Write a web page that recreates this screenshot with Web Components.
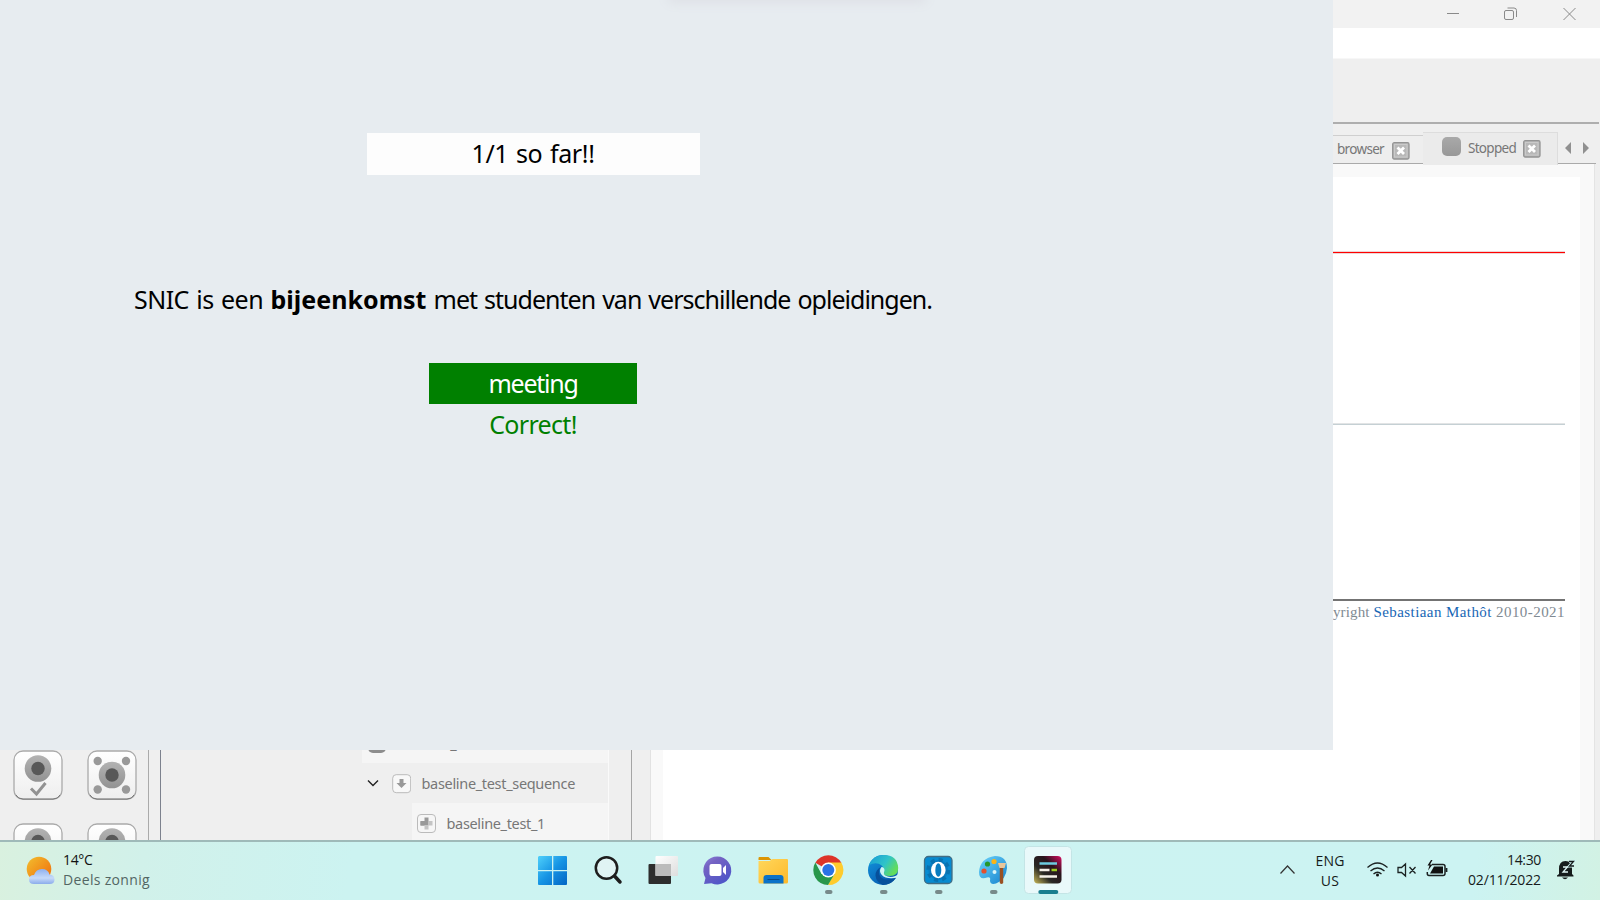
<!DOCTYPE html>
<html lang="nl"><head><meta charset="utf-8"><title>Desktop</title>
<style>html,body{margin:0;width:1600px;height:900px;overflow:hidden;background:#efefef;font-family:"Noto Sans",sans-serif}</style></head>
<body><desk-top></desk-top>
<script>
const def=(name,html,after)=>customElements.define(name,class extends HTMLElement{
  constructor(){super();this.attachShadow({mode:'open'}).innerHTML=html}
  connectedCallback(){if(after)after(this)}
});
// Text run whose letter spacing is adjusted to fill a given width
def('fit-text','<style>:host{display:inline-block;white-space:pre;flex:none}span{display:inline-block}</style><span><slot></slot></span>',el=>{
  const w=+el.getAttribute('w'),s=el.shadowRoot.querySelector('span'),n=el.textContent.length;
  el.style.width=w+'px';
  s.style.letterSpacing=((w-s.getBoundingClientRect().width)/n)+'px';
});
def('window-controls',`<style>:host{display:block;height:28px;background:#f2f2f2}svg{display:block;margin-left:auto}</style>
<svg width="180" height="28" viewBox="1420 0 180 28" fill="none" stroke="#8a8a8a"><path d="M1447 13.500h12"/><rect x="1504.500" y="10.500" width="9" height="9" rx="1.500"/><path d="M1507.500 8h6.500q2.500 0 2.500 2.500v6.500"/><path d="M1563.500 8l12 12M1575.500 8l-12 12"/></svg>`);
def('close-box',`<style>:host{display:block;width:18px;height:18px}svg{display:block}</style>
<svg width="18" height="18"><rect x=".7" y=".7" width="16.300" height="16.300" rx="1.500" fill="#b8b8b8" stroke="#949494" stroke-width="1.300"/><rect x="2.500" y="2.500" width="12.500" height="12.500" fill="none" stroke="#cacaca"/><path d="M5.500 5.500l6.500 6.500M12 5.500L5.500 12" stroke="#fff" stroke-width="2.800"/></svg>`);
def('editor-tabs',`<style>:host{display:flex;height:40px;justify-content:flex-end;color:#777;font-size:13.500px;box-sizing:border-box;position:relative}
.a{width:90px;height:29px;margin-top:11px;box-sizing:border-box;border-top:1px solid #cfcfcf;border-bottom:1px solid #aaa;display:flex;background:#eee;line-height:27px}
.a fit-text{margin-left:4px}.a close-box{margin:5.500px 0 0 7.500px}
.b{width:135px;height:33px;margin-top:8px;box-sizing:border-box;border-top:1px solid #ddd;border-right:1px solid #ddd;background:#ebebeb;display:flex;line-height:31px}
i{width:19px;height:19px;border-radius:5px;background:linear-gradient(#a9a9a9,#989898);margin:4px 7px 0 19px}.b close-box{margin:7px 0 0 7px}
.c{width:38px;height:40px;box-sizing:border-box;border-bottom:1px solid #aaa;margin-right:4px}svg{display:block}</style>
<div class="a"><fit-text w="47">browser</fit-text><close-box></close-box></div>
<div class="b"><i></i><fit-text w="48">Stopped</fit-text><close-box></close-box></div>
<div class="c"><svg width="38" height="39" viewBox="1558 124 38 39" fill="#909090"><path d="M1565 148l6-6v12zM1589 148l-6-6v12z"/></svg></div>`);
def('document-view',`<style>:host{display:block;flex:1;background:#f9f9f9;border-right:1px solid #e4e4e4;border-left:1px solid #e2e2e2;margin-right:5px;padding:13px 14px 0 12px;min-height:0}
main{background:#fff;height:100%;padding:74px 15px 0;box-sizing:border-box}
hr{border:0;margin:0;height:1px}.r{background:#f00;border:solid #ecd6d6;border-width:1px 0}.g{background:#c5d0d4;border-top:1px solid #e2e4e5;margin-top:169px}.k{background:#737373;height:2px;margin-top:174px}
p{margin:-1px 0 0;text-align:right;font:15px/24px "Liberation Serif",serif;color:#808a92;white-space:nowrap}b{font-weight:400;color:#1766b5}</style>
<main><hr class="r"><hr class="g"><hr class="k"><p><fit-text w="66">Copyright </fit-text><b><fit-text w="122.500">Sebastiaan Mathôt </fit-text></b><fit-text w="69">2010-2021</fit-text></p></main>`);
def('tool-button',`<style>:host{display:block;width:50px;height:50px}svg{display:block}</style><svg width="50" height="50" viewBox="0 0 50 50"><defs><linearGradient id="g" x2="0" y2="1"><stop stop-color="#fff"/><stop offset="1" stop-color="#eee"/></linearGradient><linearGradient id="h" x2="0" y2="1"><stop stop-color="#b3b3b3"/><stop offset="1" stop-color="#929292"/></linearGradient></defs>
<rect x="1" y="1" width="48" height="48.300" rx="9" fill="url(#g)" stroke="#aaa" stroke-width="1.300"/><path d="M3 45q2 4 7 4h30q5 0 7-4" fill="none" stroke="#777"/><g id="d"></g></svg>`,el=>{
  const y=el.hasAttribute('corners')?25:18.500;
  el.shadowRoot.querySelector('#d').innerHTML=`<circle cx="25" cy="${y}" r="13.300" fill="url(#h)"/><circle cx="25" cy="${y}" r="6.700" fill="#585858"/>`+
  (el.hasAttribute('corners')?'<g fill="#999"><circle cx="10.700" cy="11" r="4.200"/><circle cx="39" cy="11" r="4.200"/><circle cx="10.700" cy="39.500" r="4.200"/><circle cx="39" cy="39.500" r="4.200"/></g>':'<path d="M18 38.500l5.500 5.500 9-11" fill="none" stroke="#929292" stroke-width="3"/>');
});
def('tool-palette',`<style>:host{display:grid;grid-template-columns:50px 50px;column-gap:23.500px;row-gap:23.500px;align-content:end;width:149px;height:100%;box-sizing:border-box;padding-left:13.400px;border-right:1px solid #aaa;overflow:hidden}div{height:17px;overflow:hidden}</style>
<tool-button></tool-button><tool-button corners></tool-button><div><tool-button></tool-button></div><div><tool-button></tool-button></div>`);
def('item-tree',`<style>:host{display:flex;flex-direction:column;justify-content:flex-end;width:470px;margin-left:11px;border-left:1px solid #7d828e;border-right:1px solid #a5a5a5;height:100%;color:#777;font-size:14.500px}
.r{display:flex;height:40px;line-height:41px;box-sizing:border-box;margin-right:22px;border-right:1px solid #fafafa}.r svg{display:block;flex:none}
.x{margin-left:201px;background:#f5f5f5}.x i{width:18px;height:18px;border-radius:5px;background:#8d8d8d;margin:12px 0 0 6px}
.y{background:#efefef}.z{margin-left:251px;background:#f5f5f5;height:37px}
.x fit-text,.y fit-text,.z fit-text{margin-left:10.500px}</style>
<div class="r x"><i></i><fit-text w="84">baseline_test</fit-text></div>
<div class="r y"><svg width="250" height="40" viewBox="161 763 250 40" fill="none"><path d="M368 780.500l5 5 5-5" stroke="#222" stroke-width="1.400"/><rect x="392.700" y="774.700" width="18" height="18" rx="3.500" fill="#f8f8f8" stroke="#bbb"/><path d="M399.500 779h4v4h3l-5 5-5-5h3z" fill="#999"/></svg><fit-text w="153.500">baseline_test_sequence</fit-text></div>
<div class="r z"><svg width="24" height="37" viewBox="412 803 24 37"><rect x="417.500" y="814.500" width="18" height="18" rx="3.500" fill="#f6f6f6" stroke="#bbb"/><path d="M424.500 817.500h4v4h-8v4h4z" fill="#999"/><path d="M420.500 821h8v4.500h-8z" fill="#999"/><path d="M428.500 821h4v4.500h-4v4h-4v-4h4z" fill="#c4c4c4"/></svg><fit-text w="98.500">baseline_test_1</fit-text></div>`);
def('app-window',`<style>:host{display:flex;flex-direction:column;height:840px;background:#efefef}
.m{height:31px;background:#fff;border-bottom:1px solid #f7f7f7;box-sizing:border-box}.t{height:65px;box-sizing:border-box;border-bottom:2px solid #aeaeae;margin-right:1px}
.b{display:flex;height:716px}.e{display:flex;flex-direction:column;flex:1;margin-left:18px;min-width:0}</style>
<window-controls></window-controls><div class="m"></div><div class="t"></div><div class="b"><tool-palette></tool-palette><item-tree></item-tree><div class="e"><editor-tabs></editor-tabs><document-view></document-view></div></div>`);
// The experiment window lies on top of the editor window
def('experiment-window',`<style>:host{position:absolute;left:0;top:0;width:1333px;height:750px;box-sizing:border-box;background:#e7ecf0;display:block;font-size:25px;word-spacing:1.500px;color:#000}
.s{width:250px;height:2px;margin:-4px 0 0 672px;border-radius:8px;box-shadow:0 0 12px 4px #dcdee4}
.c{width:1066px;display:flex;flex-direction:column;align-items:center;padding-top:2px}
.c>div{display:flex;justify-content:center}
.p{width:333px;height:42px;line-height:41px;background:#fdfdfd;margin-top:133px}
.q{height:42px;line-height:42px;margin-top:103px}b{font-weight:700}
.a{width:208px;height:41.500px;line-height:41px;background:#008000;color:#fff;margin-top:42.500px}
.f{line-height:41px;color:#008000}</style>
<div class="s"></div><div class="c"><div class="p"><fit-text w="123">1/1 so far!!</fit-text></div>
<div class="q"><fit-text w="136.500">SNIC is een </fit-text><b><fit-text w="156">bijeenkomst</fit-text></b><fit-text w="505.500"> met studenten van verschillende opleidingen.</fit-text></div>
<div class="a"><fit-text w="89">meeting</fit-text></div><div class="f"><fit-text w="87.500">Correct!</fit-text></div></div>`);
def('weather-widget',`<style>:host{display:flex;width:525px;font:14px/20px "Open Sans","Noto Sans",sans-serif}svg{display:block;margin-left:22px}p{margin:0;color:#111}p+p{color:#536663}div{padding-top:8px}</style>
<svg width="41" height="58" viewBox="22 842 41 58"><defs><linearGradient id="s" x2="1" y2="1"><stop offset=".1" stop-color="#f2b62b"/><stop offset="1" stop-color="#f06a09"/></linearGradient><linearGradient id="c" x2="0" y2="1"><stop stop-color="#8fb0ee"/><stop offset=".6" stop-color="#c6daf9"/><stop offset="1" stop-color="#8baceb"/></linearGradient></defs><circle cx="39" cy="869" r="12.300" fill="url(#s)"/><path d="M34 884q-5 0-5-4.500t5-4.500q2-6 8-6t7.500 5.500q5 .5 5 5t-5 4.500z" fill="url(#c)"/></svg>
<div><p><fit-text w="29.500">14°C</fit-text></p><p><fit-text w="87">Deels zonnig</fit-text></p></div>`);
const art=[
`<linearGradient id="a" gradientUnits="userSpaceOnUse" x1="538" y1="856" x2="567" y2="885"><stop stop-color="#4fd0fb"/><stop offset=".5" stop-color="#1694e4"/><stop offset="1" stop-color="#0264c4"/></linearGradient><path fill="url(#a)" d="M539 856h13v14h-14v-13zM553.300 856h12.700q1 0 1 1v13h-13.700zM538 871.300h14V885h-13q-1 0-1-1zM553.300 871.300H567V884q0 1-1 1h-12.700z"/>`,
`<circle cx="606.500" cy="868" r="10.700" fill="#e0f3f3" stroke="#1d1d1d" stroke-width="2.500"/><path d="M614.500 876l5.500 6" stroke="#1d1d1d" stroke-width="3.500" stroke-linecap="round"/>`,
`<linearGradient id="a" x2="1" y2="1"><stop stop-color="#fff"/><stop offset="1" stop-color="#ddd"/></linearGradient><rect x="648.500" y="864" width="22.500" height="20" rx="1" fill="#2d2d2d"/><rect x="655.500" y="856" width="22.500" height="20" rx="1" fill="url(#a)"/><path d="M655.500 864H671v12h-15.500z" fill="#bbb"/>`,
`<linearGradient id="a" x2=".7" y2="1"><stop stop-color="#8d85dc"/><stop offset=".3" stop-color="#7563c3"/><stop offset="1" stop-color="#4d55c8"/></linearGradient><path d="M704 884l1.500-6a14 14 0 1 1 6 5.200z" fill="url(#a)"/><rect x="709.500" y="864" width="12" height="12" rx="2" fill="#fff"/><path d="M723 868l3-3v10l-3-3z" fill="#fff"/>`,
`<linearGradient id="a" x2="1" y2="1"><stop stop-color="#ffd75c"/><stop offset="1" stop-color="#fdb92a"/></linearGradient><path d="M758.500 858q0-1 1-1h9l3 3h-13z" fill="#dc9505"/><path d="M758.500 861h11l3-2H787q1 0 1 1v22q0 1.500-1.500 1.500H760q-1.500 0-1.500-1.500z" fill="url(#a)"/><path d="M763.500 883.500V878q0-3 3-3h14q3 0 3 3v5.500z" fill="#0b72c8"/><path d="M767.500 879.500h12" stroke="#074b89"/>`,
`<path d="M815.400 862.800A15 15 0 0 1 841.300 862.800L828 870z" fill="#dd3429"/><path d="M841.300 862.500A15 15 0 0 1 828 885L834 874 828 862.500z" fill="#fecb2e"/><path d="M815.300 862.500A15 15 0 0 0 828 885l6.500-11-13 0z" fill="#28974b"/><circle cx="828.300" cy="870" r="7.600" fill="#fff"/><circle cx="828.300" cy="870" r="6" fill="#2b72e5"/>`,
`<linearGradient id="a" x2="1" y2=".5"><stop stop-color="#169bd6"/><stop offset=".6" stop-color="#2fc3c9"/><stop offset="1" stop-color="#62dc5b"/></linearGradient><linearGradient id="b" x2=".7" y2="1"><stop stop-color="#1297df"/><stop offset="1" stop-color="#0758ad"/></linearGradient><circle cx="883" cy="870" r="15" fill="url(#b)"/><path d="M869 865Q873 855 883.500 855q14 0 14.700 13 0 8-8.500 8-7 0-6-3.500 1-4-2-7-5-4-12.700-.5z" fill="url(#a)"/><path d="M881 867q-3 3-1.500 8 3 7 16.500 3-5 7-13 7-7-3-7.500-9.500 0-6 5.500-8.500z" fill="#07509b"/><path d="M881.500 867q3 0 3 3.500-1.500 3.500.8 5 4.500 2.500 10 .5l2-1 2.500 0 0 2.500-1.500 0q-12 2.500-16.500-2.500-3.500-4-.3-8z" fill="#cff4f4"/>`,
`<rect x="924.500" y="856.500" width="27.500" height="27" rx="4" fill="#078bd1" stroke="#426d83" stroke-width="1.300"/><circle cx="938.300" cy="870" r="10" fill="#087cc0" stroke="#0872b0" stroke-width="4" stroke-dasharray="4 3.850"/><ellipse cx="938.300" cy="870" rx="7.300" ry="8.300" fill="#fff"/><ellipse cx="938.300" cy="870" rx="3" ry="6.700" fill="#087cc0"/>`,
`<linearGradient id="a" x2="1" y2="1"><stop stop-color="#6cd4fa"/><stop offset="1" stop-color="#1582ce"/></linearGradient><path d="M979 872q1-14 16-16 12 0 12 12-1 12-11 15.500-6 1.500-6-3 1-4-3-3-8 3-8-5.500z" fill="url(#a)"/><circle cx="994.500" cy="872" r="2" fill="#d9f5f8"/><circle cx="987.500" cy="864" r="2.600" fill="#26972c"/><circle cx="994" cy="861.500" r="2.600" fill="#fbb416"/><circle cx="984" cy="871" r="2.600" fill="#e3502d"/><path d="M998 863h8l-1.500 5h-5z" fill="#e8c69b"/><path d="M999.800 868h3.400v15q-1.700 2-3.400 0z" fill="#995022"/>`,
`<linearGradient id="a" x1="0" y1="1" x2="1" y2="0"><stop stop-color="#c9b957"/><stop offset=".35" stop-color="#292825"/><stop offset=".65" stop-color="#28141c"/><stop offset="1" stop-color="#db0d63"/></linearGradient><rect x="1024.500" y="846.500" width="47" height="47" rx="4" fill="#e9f9fa" stroke="#c4e5e6"/><rect x="1034" y="856" width="27.500" height="27.500" rx="4" fill="url(#a)"/><path d="M1039.500 863.500h17.500" stroke="#6dcbe0" stroke-width="2.500"/><path d="M1039.500 870h10M1039.500 876.500h17.500" stroke="#f5f0e8" stroke-width="2.500"/><path d="M1051.500 870h5.500" stroke="#9bcb20" stroke-width="2.500"/>`];
def('task-icon','<style>:host{display:block;width:55px;height:58px}svg{display:block}</style><svg width="55" height="58"></svg>',el=>{
  const i=+el.getAttribute('index'),s=el.shadowRoot.querySelector('svg'),x=525+55*i,c=x+28.500;
  s.setAttribute('viewBox',`${x} 842 55 58`);
  s.innerHTML=art[i]+(i===9?'<rect x="1038.300" y="890" width="20" height="4" rx="2" fill="#197f8f"/>':i>4?`<rect x="${c-3.500}" y="890" width="7.500" height="4" rx="2" fill="#778a8a"/>`:'');
});
def('system-tray',`<style>:host{display:flex;flex:1;font:14px/20px "Open Sans","Noto Sans",sans-serif;color:#161b1b}svg{display:block;flex:none}.l{width:30px;text-align:center;padding-top:9px;line-height:19.500px}.d{width:86px;text-align:right;padding-top:8px}div{flex:none}div fit-text{display:block}.d fit-text{margin-left:auto}.l fit-text{margin:auto}</style>
<svg width="240" height="58" viewBox="1075 842 240 58" fill="none"><path d="M1280.500 873.500l7-7.500 7 7.500" stroke="#333" stroke-width="1.200"/></svg>
<div class="l"><fit-text w="29">ENG</fit-text><fit-text w="18.500">US</fit-text></div>
<svg width="110" height="58" viewBox="1345 842 110 58" fill="none" stroke="#1b2222" stroke-width="1.300"><path d="M1367.500 867.500q10-9 20 0M1370.500 871q7-6 14 0M1373.500 874q4-3.500 8 0"/><circle cx="1377.500" cy="875" r="1.500" fill="#111" stroke="none"/><path d="M1398 867.500h3.500l4-3.500v12l-4-3.500h-3.500zM1409.500 867l6 6.500M1415.500 867l-6 6.500"/><path d="M1432 864.500h11q2 0 2 2v7q0 2-2 2h-14q-1.700 0-1.700-2v-1.500" stroke-width="1.500"/><path d="M1434 866.500h9v7h-13z" fill="#111" stroke="none"/><path d="M1446.500 868v4" stroke-width="1.800"/><path d="M1431 860l-3.500 5.500h2l-1.500 5 4.500-6h-2.500l2.500-4.500z" fill="#111" stroke="none"/></svg>
<div class="d"><fit-text w="34">14:30</fit-text><fit-text w="73">02/11/2022</fit-text></div>
<svg width="59" height="58" viewBox="1541 842 59 58"><path d="M1559 874v-5q0-8 6.500-8t6.500 8v5l1.500 1.500v1h-16.500v-1z" fill="#151b1b"/><path d="M1562 877.500h6q-3 3.500-6 0z" fill="#151b1b"/><path d="M1563 867h4.500l-4.500 5h5" fill="none" stroke="#dff5f4" stroke-width="1.300"/><path d="M1569 861.500h4.500l-4 4.500h4.500" fill="none" stroke="#d0f3f2" stroke-width="3"/><path d="M1569 861.500h4.500l-4 4.500h4.500" fill="none" stroke="#151b1b" stroke-width="1.300"/></svg>`);
def('task-bar',`<style>:host{display:flex;height:60px;box-sizing:border-box;border-top:2px solid #9fbab9;background:linear-gradient(97deg,#d9f1df 0,#d1f1ea 9%,#ccf3f1 22%,#ccf3f2 92%,#d2f2e4 100%)}</style>
<weather-widget></weather-widget>${art.map((_,i)=>`<task-icon index="${i}"></task-icon>`).join('')}<system-tray></system-tray>`);
def('desk-top',`<style>:host{display:block;position:relative;width:1600px;height:900px;overflow:hidden}</style><app-window></app-window><experiment-window></experiment-window><task-bar></task-bar>`);
</script></body></html>
